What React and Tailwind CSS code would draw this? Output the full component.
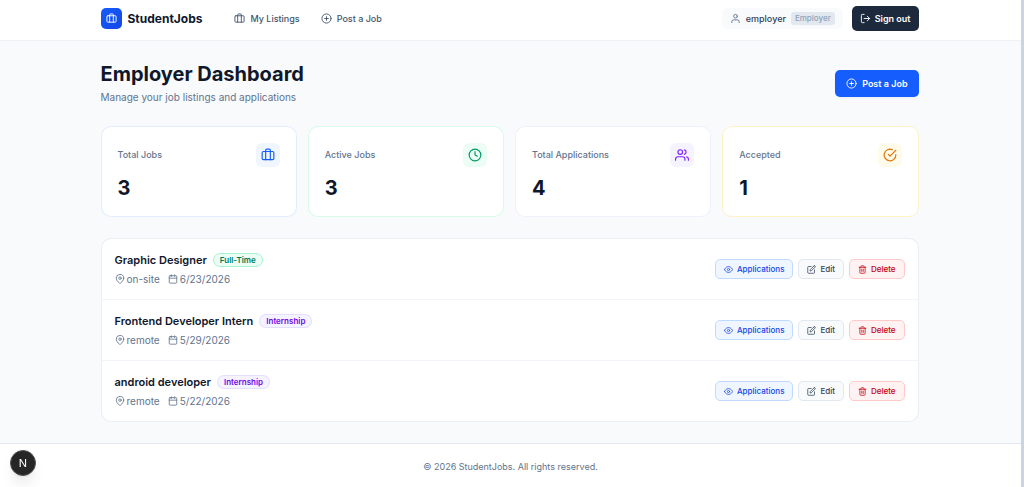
import {
  FiCalendar,
  FiCheckCircle,
  FiClock,
  FiEdit,
  FiEye,
  FiLogOut,
  FiMapPin,
  FiPlusCircle,
  FiTrash2,
  FiUser,
  FiUsers,
} from "react-icons/fi";
import { Briefcase } from "lucide-react";

const stats = [
  { label: "Total Jobs", value: 3, icon: Briefcase, border: "border-blue-100/80", tile: "bg-blue-50 text-blue-600" },
  { label: "Active Jobs", value: 3, icon: FiClock, border: "border-emerald-100/80", tile: "bg-emerald-50 text-emerald-600" },
  { label: "Total Applications", value: 4, icon: FiUsers, border: "border-violet-100/70", tile: "bg-violet-50 text-violet-600" },
  { label: "Accepted", value: 1, icon: FiCheckCircle, border: "border-amber-100", tile: "bg-amber-50 text-amber-600" },
];

const jobs = [
  { id: 1, title: "Graphic Designer", type: "Full-Time", location: "on-site", date: "6/23/2026" },
  { id: 2, title: "Frontend Developer Intern", type: "Internship", location: "remote", date: "5/29/2026" },
  { id: 3, title: "android developer", type: "Internship", location: "remote", date: "5/22/2026" },
];

const typeStyles = {
  "Full-Time": "bg-emerald-50 text-emerald-700 border-emerald-200",
  Internship: "bg-violet-50 text-violet-700 border-violet-200/70",
};

function Header() {
  return (
    <header className="bg-white border-b border-slate-200/60">
      <div className="max-w-[868px] mx-auto pl-6 pr-[26px] h-10 pb-[3px] flex items-center justify-between">
        <div className="flex items-center gap-8">
          <a href="#" className="flex items-center gap-[6px]">
            <span className="w-[21px] h-[21px] rounded-[5px] bg-gradient-to-br from-blue-600 to-blue-700 text-white flex items-center justify-center">
              <Briefcase size={11} strokeWidth={2} />
            </span>
            <span className="text-[12px] font-bold text-slate-900">StudentJobs</span>
          </a>
          <nav className="flex items-center gap-[21px] text-[9px] font-medium text-slate-600">
            <a href="#" className="flex items-center gap-[5px]">
              <Briefcase size={11} />
              My Listings
            </a>
            <a href="#" className="flex items-center gap-[5px]">
              <FiPlusCircle size={11} />
              Post a Job
            </a>
          </nav>
        </div>

        <div className="flex items-center gap-[9px]">
          <div className="flex items-center gap-[5px] h-[21px] px-2 rounded-md bg-slate-50 text-[9px] font-medium text-slate-700">
            <FiUser size={11} className="text-slate-500" />
            employer
            <span className="px-1 rounded-[3px] bg-slate-200 text-[8px] leading-[13px] text-slate-400">
              Employer
            </span>
          </div>
          <button className="flex items-center gap-1 h-[25px] px-2 rounded-[5px] bg-slate-800 text-[9px] font-semibold text-white">
            <FiLogOut size={11} />
            Sign out
          </button>
        </div>
      </div>
    </header>
  );
}

function StatCard({ stat }) {
  const Icon = stat.icon;

  return (
    <div className={`bg-white border rounded-[10px] p-4 ${stat.border}`}>
      <div className="flex items-center justify-between">
        <span className="text-[9px] font-medium text-slate-500">{stat.label}</span>
        <span className={`w-6 h-6 rounded-md flex items-center justify-center ${stat.tile}`}>
          <Icon size={14} />
        </span>
      </div>
      <div className="mt-[9px] text-[20px] leading-6 font-bold text-slate-900">{stat.value}</div>
    </div>
  );
}

function JobRow({ job }) {
  return (
    <div className="flex items-center justify-between px-[13px] py-[13px]">
      <div>
        <div className="flex items-center gap-[6px]">
          <h2 className="text-[11px] leading-4 font-semibold text-slate-900">{job.title}</h2>
          <span className={`px-[6px] border rounded-full text-[8px] leading-3 font-semibold ${typeStyles[job.type]}`}>
            {job.type}
          </span>
        </div>
        <div className="mt-1 flex items-center gap-2 text-[10px] leading-[14px] text-slate-500">
          <span className="flex items-center gap-[2px]">
            <FiMapPin size={10} />
            {job.location}
          </span>
          <span className="flex items-center gap-[2px]">
            <FiCalendar size={10} />
            {job.date}
          </span>
        </div>
      </div>

      <div className="flex items-center gap-[5px] text-[8px] font-medium">
        <button className="flex items-center gap-1 h-5 px-2 border rounded-[5px] bg-blue-50 border-blue-200 text-blue-700">
          <FiEye size={9} />
          Applications
        </button>
        <button className="flex items-center gap-1 h-5 px-2 border rounded-[5px] bg-slate-50 border-slate-200 text-slate-700">
          <FiEdit size={9} />
          Edit
        </button>
        <button className="flex items-center gap-1 h-5 px-2 border rounded-[5px] bg-red-50 border-red-200 text-red-700">
          <FiTrash2 size={9} />
          Delete
        </button>
      </div>
    </div>
  );
}

export default function App() {
  return (
    <div className="min-h-screen flex flex-col bg-slate-50 border-r-[3px] border-slate-300 font-['Inter',sans-serif]">
      <Header />

      <main className="flex-1 w-full max-w-[868px] mx-auto pl-6 pr-[26px] py-[21px]">
        <div className="flex items-center justify-between">
          <div>
            <h1 className="text-[20px] leading-6 font-bold text-slate-900">Employer Dashboard</h1>
            <p className="mt-[3px] text-[10px] leading-4 text-slate-500">
              Manage your job listings and applications
            </p>
          </div>
          <button className="flex items-center gap-[5px] h-[27px] px-[11px] rounded-[5px] bg-blue-600 text-[9px] font-semibold text-white shadow-xs">
            <FiPlusCircle size={11} />
            Post a Job
          </button>
        </div>

        <div className="mt-[21px] grid grid-cols-4 gap-[11px]">
          {stats.map((stat) => (
            <StatCard key={stat.label} stat={stat} />
          ))}
        </div>

        <div className="mt-[21px] bg-white border border-slate-200/70 rounded-[10px] divide-y divide-slate-100">
          {jobs.map((job) => (
            <JobRow key={job.id} job={job} />
          ))}
        </div>
      </main>

      <footer className="bg-white border-t border-slate-200 py-4 text-center text-[9px] leading-[14px] text-slate-500">
        © 2026 StudentJobs. All rights reserved.
      </footer>

      <button
        aria-label="Open dev tools"
        className="fixed left-[10px] bottom-[11px] w-[26px] h-[26px] rounded-full bg-neutral-800 border border-neutral-600 shadow-lg flex items-center justify-center text-[11px] text-white"
      >
        N
      </button>
    </div>
  );
}
